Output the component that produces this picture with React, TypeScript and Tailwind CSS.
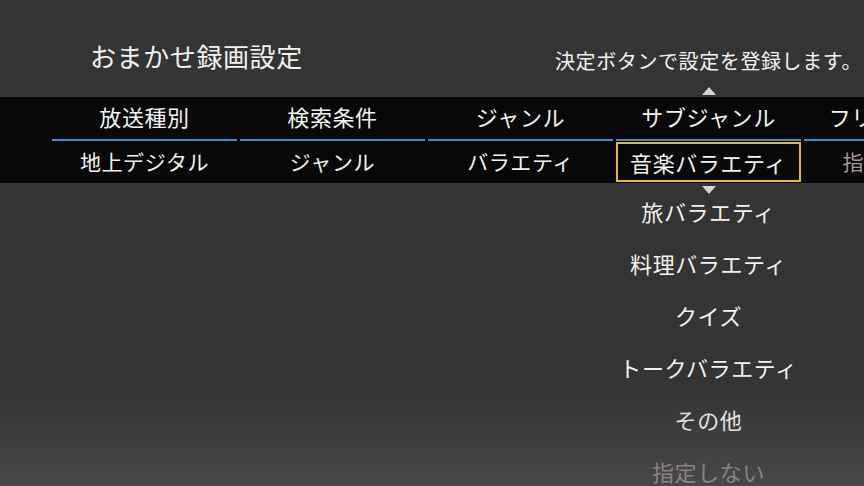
import React from 'react';

const columns = [
    { label: '放送種別', value: '地上デジタル' },
    { label: '検索条件', value: 'ジャンル' },
    { label: 'ジャンル', value: 'バラエティ' },
    { label: 'サブジャンル', value: '音楽バラエティ', selected: true },
    { label: 'フリーワード', value: '指定しない', muted: true },
];

const options = [
    { text: '旅バラエティ', className: 'text-[#f2f2f2]' },
    { text: '料理バラエティ', className: 'text-[#f2f2f2]' },
    { text: 'クイズ', className: 'text-[#f2f2f2]' },
    { text: 'トークバラエティ', className: 'text-[#f2f2f2]' },
    { text: 'その他', className: 'text-[#e2e2e2]' },
    { text: '指定しない', className: 'text-[#8c8282]' },
];

function Triangle({ up }: { up?: boolean }) {
    return (
        <svg width="14" height="8" viewBox="0 0 14 8" className="block">
            {up ? <polygon points="7,0 14,8 0,8" fill="#d4d4d4" /> : <polygon points="0,0 14,0 7,8" fill="#d4d4d4" />}
        </svg>
    );
}

export default function App() {
    return (
        <div
            className="w-[864px] h-[486px] overflow-hidden bg-[linear-gradient(180deg,#343434_0%,#343434_80%,#484848_100%)] text-[#f2f2f2] tracking-[0.6px]"
            style={{ fontFamily: '"Noto Sans CJK JP", "Noto Sans", sans-serif' }}
        >
            {/* Title */}
            <div className="h-[97px] flex justify-between pt-[40px] pl-[90px] pr-[2px]">
                <div className="text-[26px] leading-[32px]">おまかせ録画設定</div>
                <div className="text-[20px] leading-[24px] mt-[9px]">決定ボタンで設定を登録します。</div>
            </div>

            {/* Settings band */}
            <div className="h-[86px] bg-[#080808] flex gap-[3px] pl-[52px]">
                {columns.map((c) => (
                    <div key={c.label} className="w-[185px] shrink-0 flex flex-col relative">
                        {c.selected && (
                            <div className="absolute left-1/2 -translate-x-1/2 -top-[10px]">
                                <Triangle up />
                            </div>
                        )}
                        <div className="h-[42px] pb-[3px] flex items-center justify-center text-[22px] whitespace-nowrap">{c.label}</div>
                        <div className="h-[2px] bg-[#3a8fd8]" />
                        {c.selected ? (
                            <div className="mt-[1px] h-[40px] border-2 border-[#e8b534] flex items-center justify-center text-[22px] whitespace-nowrap">
                                {c.value}
                            </div>
                        ) : (
                            <div
                                className={
                                    'h-[42px] flex items-center justify-center text-[21px] whitespace-nowrap ' +
                                    (c.muted ? 'text-[#a89898]' : '')
                                }
                            >
                                {c.value}
                            </div>
                        )}
                        {c.selected && (
                            <div className="absolute left-1/2 -translate-x-1/2 -bottom-[11px]">
                                <Triangle />
                            </div>
                        )}
                    </div>
                ))}
            </div>

            {/* Option list */}
            <div className="pl-[616px] pt-[2px]">
                <div className="w-[185px] flex flex-col">
                    {options.map((o) => (
                        <div key={o.text} className={'h-[52px] flex items-center justify-center text-[22px] whitespace-nowrap ' + o.className}>
                            {o.text}
                        </div>
                    ))}
                </div>
            </div>
        </div>
    );
}
